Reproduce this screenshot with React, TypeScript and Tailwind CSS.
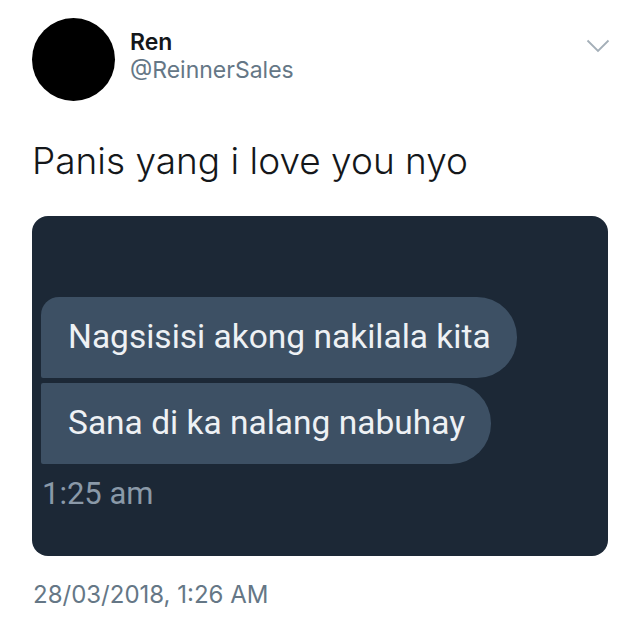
import React from "react";

const App: React.FC = () => {
  return (
    <div className="w-[640px] h-[627px] bg-white overflow-hidden font-['Inter',sans-serif]">
      {/* header */}
      <div className="flex items-start pt-[18px] pl-[32px] pr-[30px]">
        <div className="w-[83px] h-[83px] rounded-full bg-black shrink-0" />
        <div className="ml-[15px] pt-[11px] flex flex-col">
          <span className="text-[23px] leading-[27px] font-semibold text-[#14171a]">Ren</span>
          <span className="text-[23px] leading-[27px] text-[#657786] mt-[1px]">@ReinnerSales</span>
        </div>
        <div className="ml-auto pt-[21px]">
          <svg width="24" height="14" viewBox="0 0 24 14" fill="none">
            <path d="M1.5 1.5l10.5 10.5L22.5 1.5" stroke="#a4afb8" strokeWidth="1.8" />
          </svg>
        </div>
      </div>

      {/* tweet text */}
      <p className="mt-[38px] pl-[32px] text-[37px] leading-[44px] font-light text-[#14171a]">
        Panis yang i love you nyo
      </p>

      {/* screenshot card */}
      <div className="mt-[33px] mx-[32px] h-[340px] rounded-[16px] bg-[#1c2836] pt-[81px] pl-[9px] font-['Roboto',sans-serif]">
        <div className="flex flex-col items-start gap-[5px]">
          <div className="h-[81px] flex items-center pl-[27px] pr-[26px] bg-[#3d5064] rounded-tl-[18px] rounded-bl-[2px] rounded-r-[40px]">
            <span className="text-[33.5px] text-[#eef1f4]">Nagsisisi akong nakilala kita</span>
          </div>
          <div className="h-[81px] flex items-center pl-[27px] pr-[26px] bg-[#3d5064] rounded-l-[2px] rounded-r-[40px]">
            <span className="text-[33.5px] text-[#eef1f4]">Sana di ka nalang nabuhay</span>
          </div>
        </div>
        <div className="mt-[10px] pl-[1px] text-[31px] leading-[40px] text-[#8a99a8]">1:25 am</div>
      </div>

      {/* date */}
      <div className="mt-[24px] pl-[33px] text-[24px] leading-[30px] text-[#657786]">
        28/03/2018, 1:26 AM
      </div>
    </div>
  );
};

export default App;
